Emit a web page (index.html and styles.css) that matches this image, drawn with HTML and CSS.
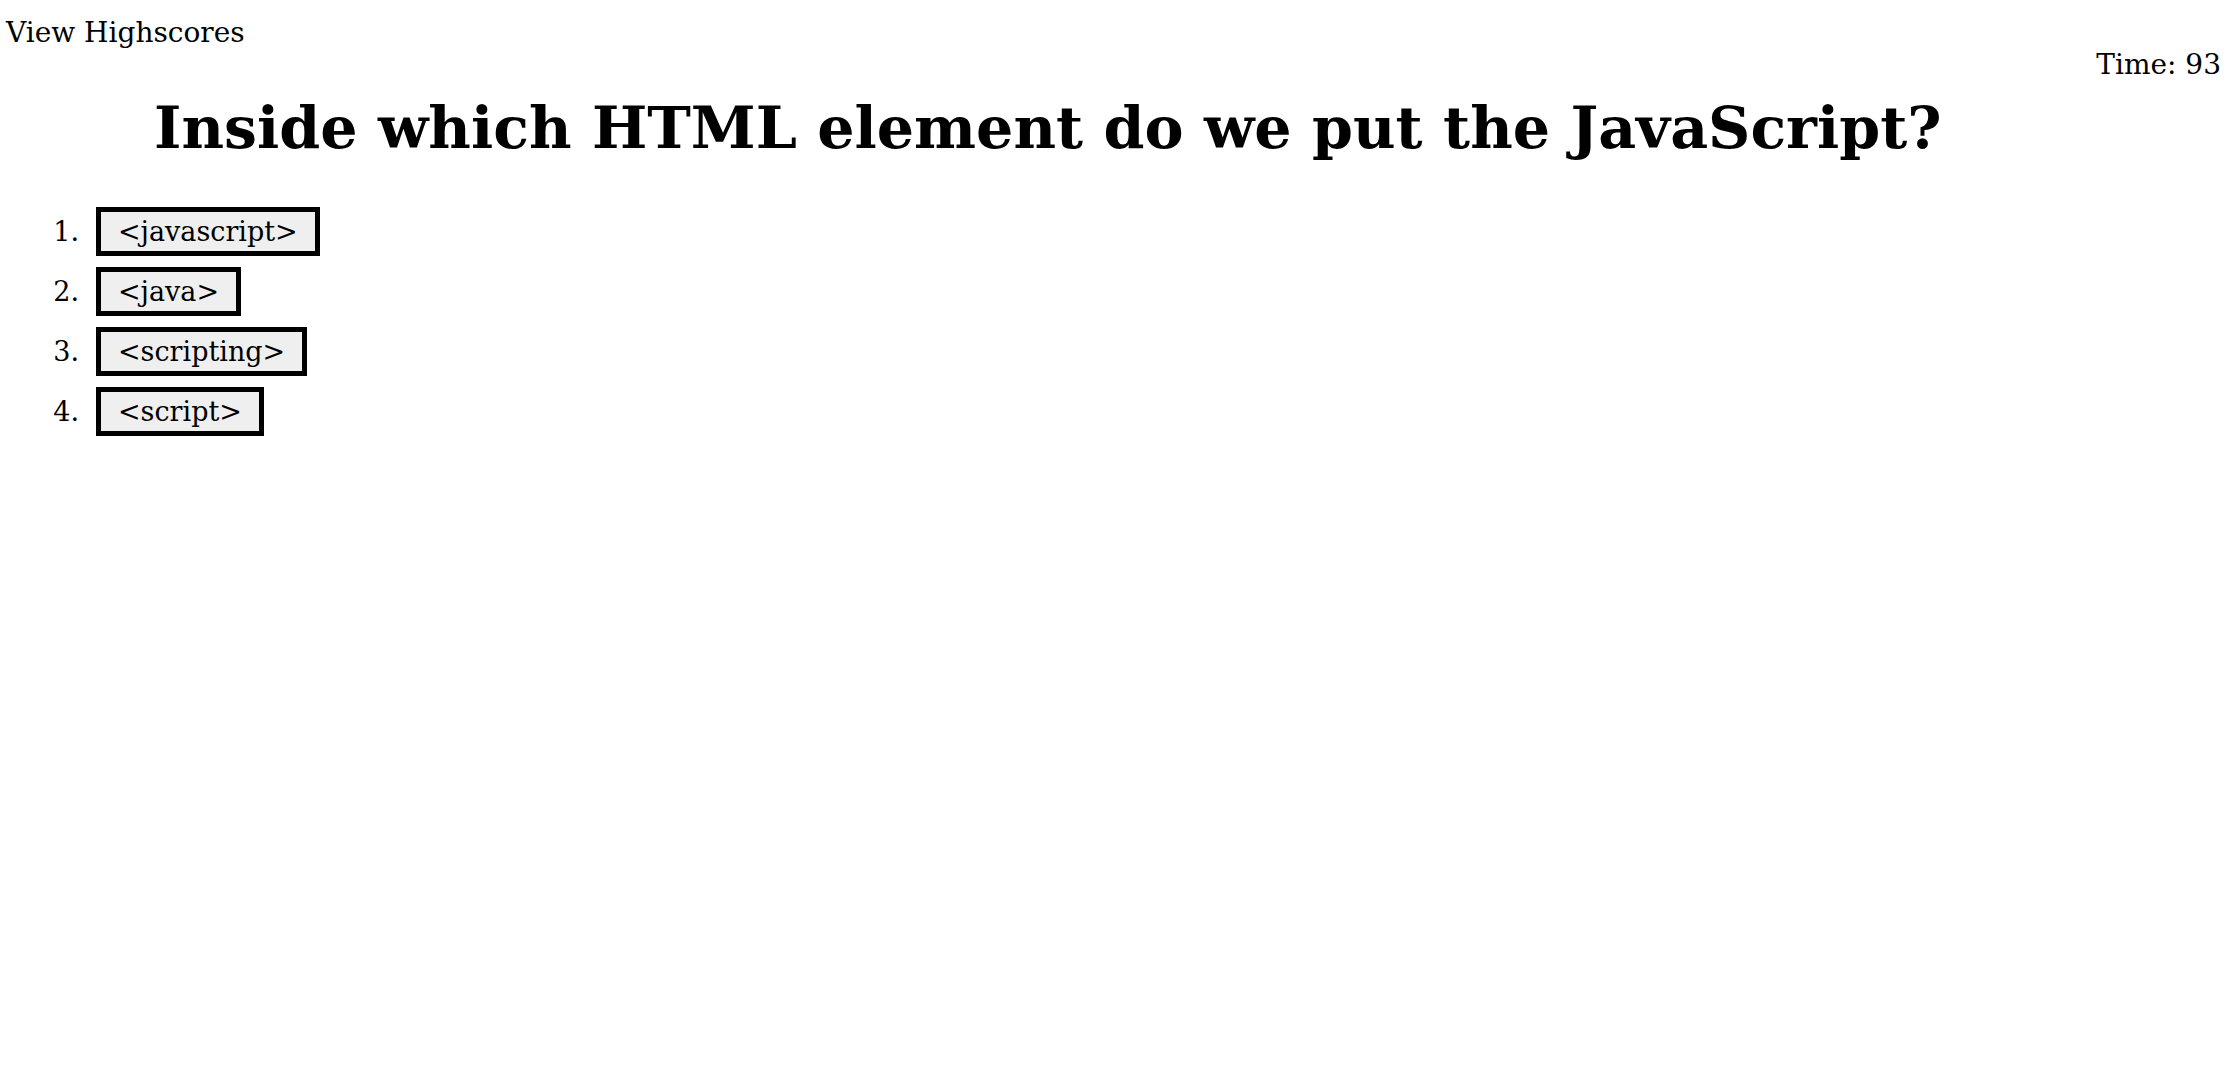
FILE: index.html
```html
<!DOCTYPE html>
<html lang="en">
<head>
<meta charset="utf-8">
<title>Code Quiz</title>
<link rel="stylesheet" href="styles.css">
</head>
<body>
<header class="top">
  <a class="scores" href="#">View Highscores</a>
  <div class="timer">Time: <span>93</span></div>
</header>
<main class="quiz">
  <h1 class="question">Inside which HTML element do we put the JavaScript?</h1>
  <ol class="answers">
    <li><button class="answer">&lt;javascript&gt;</button></li>
    <li><button class="answer">&lt;java&gt;</button></li>
    <li><button class="answer">&lt;scripting&gt;</button></li>
    <li><button class="answer">&lt;script&gt;</button></li>
  </ol>
</main>
</body>
</html>
```
FILE: styles.css
```css
html, body {
  margin: 0;
  padding: 0;
  background: #ffffff;
  color: #000000;
  font-family: "DejaVu Serif", "Liberation Serif", serif;
}

.top {
  display: flex;
  justify-content: space-between;
  align-items: flex-start;
  padding: 0 17px 0 6px;
}

.scores {
  color: #000000;
  text-decoration: none;
  font-size: 28px;
  line-height: 32px;
  margin-top: 17px;
}

.timer {
  font-size: 28px;
  line-height: 32px;
  margin-top: 49px;
}

.quiz {
  padding: 0;
}

.question {
  margin: 12px 0 0 0;
  padding-left: 154px;
  font-size: 58.6px;
  line-height: 70px;
  font-weight: bold;
}

.answers {
  list-style: none;
  counter-reset: item;
  margin: 44px 0 0 0;
  padding-left: 40px;
  font-size: 27px;
}

.answers li {
  counter-increment: item;
  display: flex;
  align-items: center;
  height: 60px;
  align-items: flex-start;
}

.answers li::before {
  content: counter(item) ".";
  width: 39px;
  padding-right: 17px;
  text-align: right;
  line-height: 49px;
}

.answer {
  font-family: "DejaVu Serif", "Liberation Serif", serif;
  font-size: 27px;
  line-height: 37px;
  color: #000000;
  background: #efefef;
  border: 5px solid #000000;
  border-radius: 0;
  padding: 1px 17px;
  margin: 0;
}
```
